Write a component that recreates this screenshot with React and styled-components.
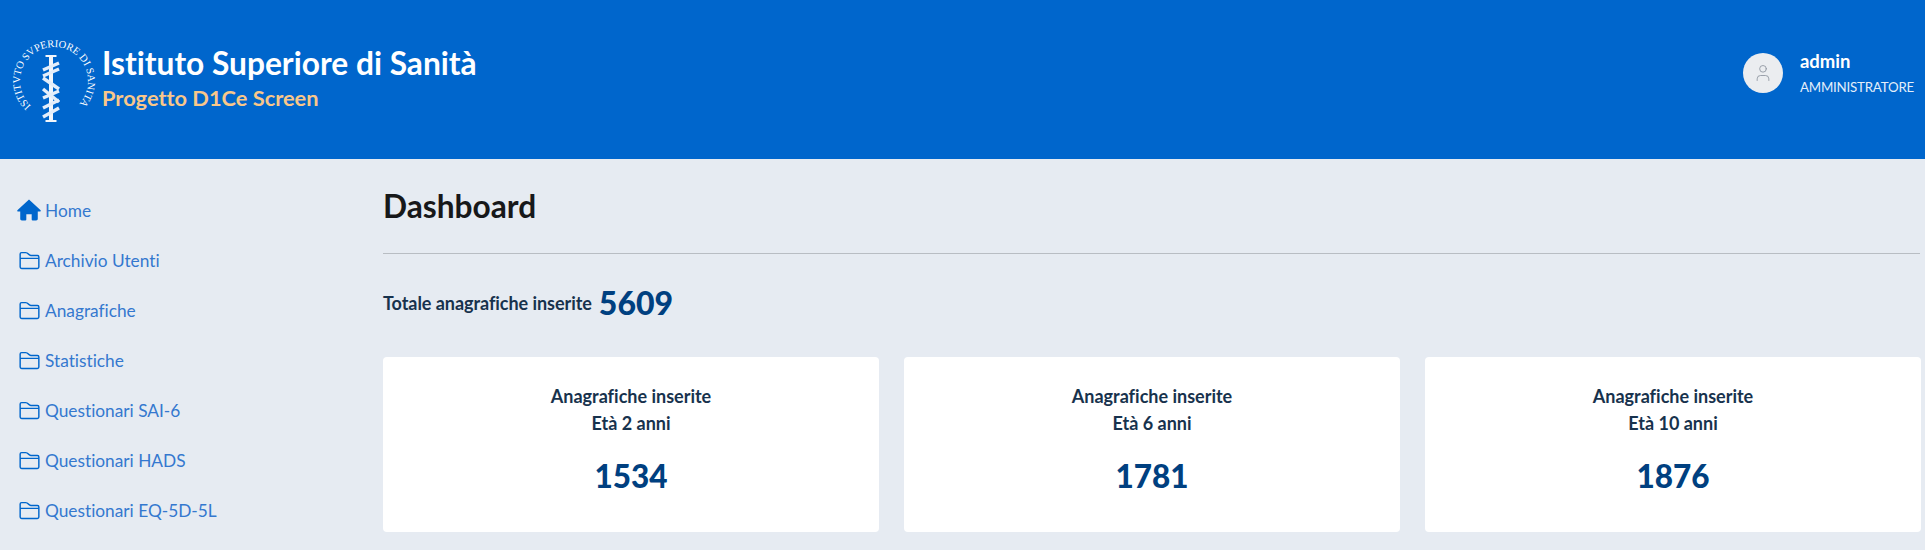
import React from "react";
import styled, { createGlobalStyle } from "styled-components";
import { User } from "lucide-react";
import { BsFolder2 } from "react-icons/bs";

const GlobalStyle = createGlobalStyle`
  html, body {
    margin: 0;
    padding: 0;
    background: #e6ebf2;
    font-family: "Lato", "Open Sans", sans-serif;
    font-variant-ligatures: none;
  }
`;

const Page = styled.div`
  width: 1925px;
  height: 550px;
  overflow: hidden;
  background: #e6ebf2;
`;

const Header = styled.header`
  height: 159px;
  background: #0066cc;
  display: flex;
  align-items: center;
  justify-content: space-between;
  padding: 0 9px 0 4px;
  color: #fff;
`;

const Brand = styled.div`
  display: flex;
  align-items: center;
  gap: 0;
`;

const BrandText = styled.div`
  display: flex;
  flex-direction: column;
  margin: -3px 0 0 -2px;
`;

const BrandTitle = styled.div`
  font-size: 31.7px;
  line-height: 40px;
  font-weight: 700;
  white-space: nowrap;
`;

const BrandSub = styled.div`
  font-size: 21.8px;
  line-height: 30px;
  font-weight: 700;
  color: #f8c78a;
  white-space: nowrap;
`;

const UserBox = styled.div`
  display: flex;
  align-items: center;
  gap: 17px;
  margin-top: -13px;
`;

const Avatar = styled.div`
  width: 40px;
  height: 40px;
  border-radius: 50%;
  background: #ebedf0;
  display: flex;
  align-items: center;
  justify-content: center;
  color: #8a929c;
`;

const UserText = styled.div`
  display: flex;
  flex-direction: column;
  gap: 6px;
  padding-right: 2px;
`;

const UserName = styled.div`
  font-size: 18.5px;
  line-height: 22px;
  font-weight: 700;
`;

const UserRole = styled.div`
  font-size: 13.3px;
  line-height: 18px;
  letter-spacing: -0.2px;
  color: #e3eefa;
`;

const Body = styled.div`
  display: flex;
`;

const Sidebar = styled.nav`
  width: 383px;
  flex: none;
  padding-top: 26px;
  box-sizing: border-box;
`;

const NavItem = styled.a`
  height: 50px;
  display: flex;
  align-items: center;
  padding-left: 17px;
  gap: 4px;
  font-size: 17.3px;
  color: #3478cf;
`;

const NavIcon = styled.span`
  width: 24px;
  height: 24px;
  display: flex;
  align-items: center;
  justify-content: center;
  color: #0066cc;
`;

const Main = styled.main`
  width: 1537px;
  flex: none;
`;

const Title = styled.h1`
  margin: 0;
  height: 95px;
  box-sizing: border-box;
  padding-top: 27px;
  border-bottom: 1px solid #b8bdc3;
  font-size: 31.7px;
  line-height: 40px;
  font-weight: 700;
  color: #17181a;
`;

const Total = styled.div`
  display: flex;
  align-items: center;
  gap: 7px;
  height: 103px;
  box-sizing: border-box;
  padding-bottom: 6px;
`;

const TotalLabel = styled.span`
  font-size: 18px;
  font-weight: 700;
  letter-spacing: -0.05px;
  color: #17324d;
`;

const TotalValue = styled.span`
  font-size: 32px;
  font-weight: 900;
  color: #004080;
`;

const Cards = styled.div`
  display: grid;
  grid-template-columns: repeat(3, 496px);
  column-gap: 25px;
`;

const Card = styled.div`
  height: 175px;
  background: #fff;
  border-radius: 4px;
  box-sizing: border-box;
  padding-top: 26px;
  text-align: center;
`;

const CardLabel = styled.div`
  font-size: 18px;
  line-height: 27px;
  font-weight: 700;
  color: #17324d;
`;

const CardValue = styled.div`
  margin-top: 19px;
  font-size: 31.5px;
  line-height: 40px;
  font-weight: 900;
  color: #004080;
`;

const HomeIcon = () => (
  <svg width="25" height="24" viewBox="0 0 26 24" fill="#0066cc">
    <path d="M13 0.5 L25.6 12.2 C26 12.8 25.6 13.6 24.9 13.6 H22.5 V21.6 C22.5 22.7 21.8 23.4 20.7 23.4 H17 C16.3 23.4 15.9 23 15.9 22.3 V16.5 H10.1 V22.3 C10.1 23 9.7 23.4 9 23.4 H5.3 C4.2 23.4 3.5 22.7 3.5 21.6 V13.6 H1.1 C0.4 13.6 0 12.8 0.4 12.2 Z" />
  </svg>
);

const Logo = () => (
  <svg width="100" height="100" viewBox="0 0 100 100">
    <defs>
      <path id="logo-ring" d="M27 76 A34 34 0 1 1 73 76" fill="none" />
    </defs>
    <text fill="#fff" fontFamily="Liberation Serif, serif" fontSize="10.5">
      <textPath href="#logo-ring" textLength="160">
        ISTITVTO SVPERIORE DI SANITA
      </textPath>
    </text>
    <g fill="#f2f6fb">
      <rect x="45" y="25" width="4" height="67" />
      <rect x="41.5" y="25" width="11" height="2" />
      <rect x="41.5" y="90" width="11" height="2" />
    </g>
    <g fill="none" stroke="#e4eefa" strokeWidth="3.4">
      <path d="M39 40 L55 33" />
      <path d="M39 46 L55 39" />
      <path d="M39 48 L55 59" />
      <path d="M39 59 L55 72" />
      <path d="M39 68 L55 61" />
      <path d="M39 78 L55 70" />
      <path d="M39 87 L55 78" />
    </g>
  </svg>
);

const navItems = [
  "Archivio Utenti",
  "Anagrafiche",
  "Statistiche",
  "Questionari SAI-6",
  "Questionari HADS",
  "Questionari EQ-5D-5L",
];

const cards = [
  { age: 2, value: 1534 },
  { age: 6, value: 1781 },
  { age: 10, value: 1876 },
];

export default function App() {
  return (
    <Page>
      <GlobalStyle />
      <Header>
        <Brand>
          <Logo />
          <BrandText>
            <BrandTitle>Istituto Superiore di Sanità</BrandTitle>
            <BrandSub>Progetto D1Ce Screen</BrandSub>
          </BrandText>
        </Brand>
        <UserBox>
          <Avatar>
            <User size={20} strokeWidth={1} />
          </Avatar>
          <UserText>
            <UserName>admin</UserName>
            <UserRole>AMMINISTRATORE</UserRole>
          </UserText>
        </UserBox>
      </Header>
      <Body>
        <Sidebar>
          <NavItem>
            <NavIcon>
              <HomeIcon />
            </NavIcon>
            Home
          </NavItem>
          {navItems.map((item) => (
            <NavItem key={item}>
              <NavIcon>
                <BsFolder2 size={23} />
              </NavIcon>
              {item}
            </NavItem>
          ))}
        </Sidebar>
        <Main>
          <Title>Dashboard</Title>
          <Total>
            <TotalLabel>Totale anagrafiche inserite</TotalLabel>
            <TotalValue>5609</TotalValue>
          </Total>
          <Cards>
            {cards.map((card) => (
              <Card key={card.age}>
                <CardLabel>Anagrafiche inserite</CardLabel>
                <CardLabel>Età {card.age} anni</CardLabel>
                <CardValue>{card.value}</CardValue>
              </Card>
            ))}
          </Cards>
        </Main>
      </Body>
    </Page>
  );
}
